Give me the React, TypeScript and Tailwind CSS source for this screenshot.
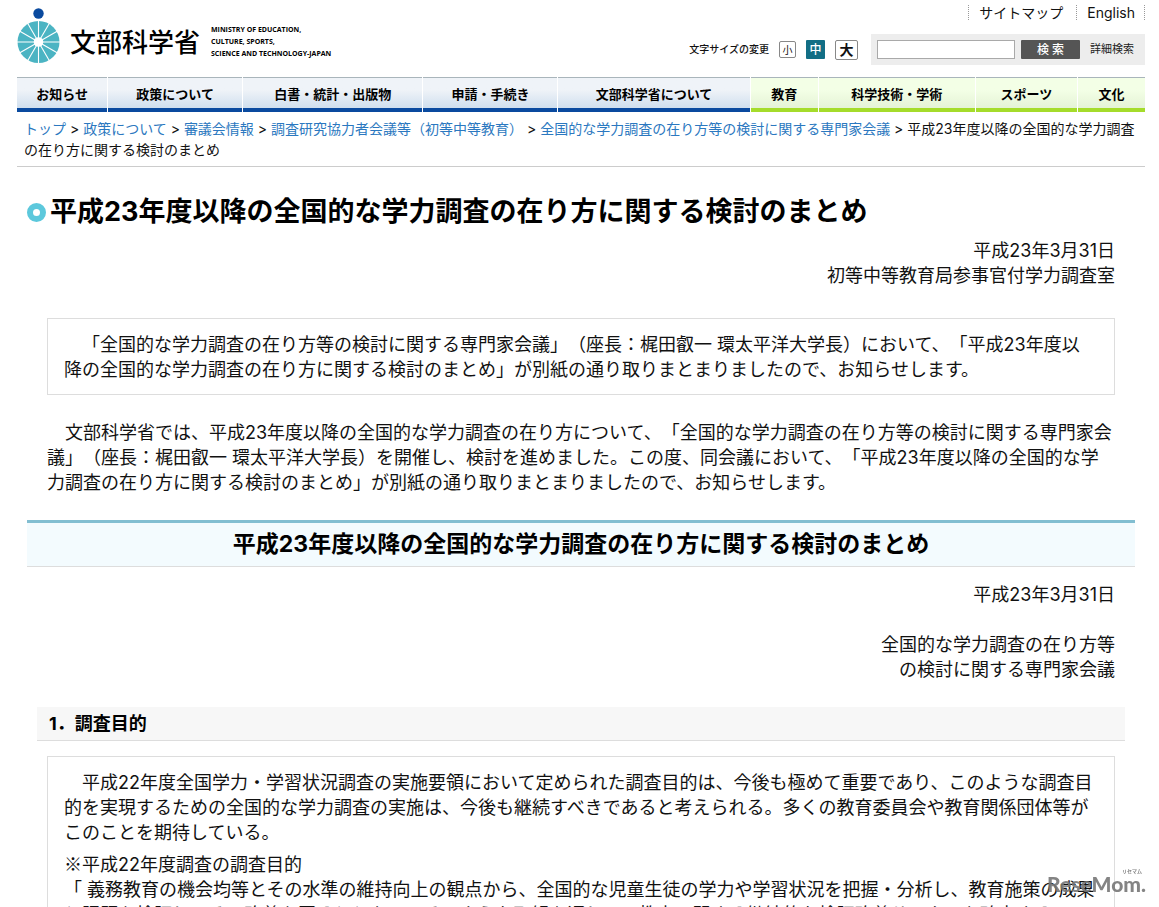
const navItems = [
  { label: "お知らせ", kind: "blue" },
  { label: "政策について", kind: "blue" },
  { label: "白書・統計・出版物", kind: "blue" },
  { label: "申請・手続き", kind: "blue" },
  { label: "文部科学省について", kind: "blue" },
  { label: "教育", kind: "green" },
  { label: "科学技術・学術", kind: "green" },
  { label: "スポーツ", kind: "green" },
  { label: "文化", kind: "green" },
];

const crumbs = [
  "トップ",
  "政策について",
  "審議会情報",
  "調査研究協力者会議等（初等中等教育）",
  "全国的な学力調査の在り方等の検討に関する専門家会議",
];

const title = "平成23年度以降の全国的な学力調査の在り方に関する検討のまとめ";

const Emblem = () => (
  <svg width="44" height="56" viewBox="0 0 44 56" aria-hidden="true">
    <circle cx="21.5" cy="5.5" r="5.2" fill="#0a4a9f" />
    <circle cx="21.5" cy="34" r="21" fill="#4bb4c3" />
    {[0, 30, 60, 90, 120, 150].map((angle) => (
      <line
        key={angle}
        x1="21.5"
        y1="12"
        x2="21.5"
        y2="56"
        stroke="#fff"
        strokeWidth="1.1"
        transform={`rotate(${angle} 21.5 34)`}
      />
    ))}
    <circle cx="21.5" cy="34" r="4.8" fill="#fff" />
  </svg>
);

const Header = () => {
  return (
    <header className="flex justify-between h-[77px]">
      <a href="#" className="flex items-start pt-2 text-black">
        <Emblem />
        <span className="ml-[9px] mt-4 text-[26px] leading-[38px] font-medium whitespace-nowrap">
          文部科学省
        </span>
        <span className="ml-[11px] mt-4 font-['Open_Sans','Noto_Sans',sans-serif] text-[7px] leading-[12px] font-bold whitespace-nowrap">
          MINISTRY OF EDUCATION,
          <br />
          CULTURE, SPORTS,
          <br />
          SCIENCE AND TECHNOLOGY-JAPAN
        </span>
      </a>

      <div className="flex flex-col items-end">
        <ul className="flex mt-[5px] mb-[14px] text-[14px] leading-[15px] border-r border-dotted border-[#999]">
          <li className="border-l border-dotted border-[#999] pl-[10px] pr-[13px]">
            <a href="#">サイトマップ</a>
          </li>
          <li className="border-l border-dotted border-[#999] pl-[10px] pr-[9px]">
            <a href="#">English</a>
          </li>
        </ul>

        <div className="flex items-center">
          <span className="text-[10px] mr-[10px] font-medium whitespace-nowrap">
            文字サイズの変更
          </span>
          <div className="flex items-center gap-[10px] mr-[13px]">
            <button className="grid place-items-center size-[17px] border border-[#888] rounded-[2px] bg-white text-[10px] leading-none">
              小
            </button>
            <button className="grid place-items-center size-[19px] bg-[#126e85] rounded-[1px] text-white text-[12px] leading-none font-medium">
              中
            </button>
            <button className="grid place-items-center w-[23px] h-5 border border-[#888] rounded-[2px] bg-white text-[14px] leading-none font-bold">
              大
            </button>
          </div>
          <form
            className="flex items-center h-[31px] pl-[6px] pr-[11px] bg-[#ededed]"
            onSubmit={(e) => e.preventDefault()}
          >
            <input
              type="text"
              aria-label="サイト内検索"
              className="w-[138px] h-[19px] px-1 bg-white border border-[#a9a9a9] text-[12px]"
            />
            <button
              type="submit"
              className="ml-[6px] w-[59px] h-[19px] rounded-[1px] bg-[#555] text-white text-[12px] leading-none font-medium"
            >
              検 索
            </button>
            <a href="#" className="ml-[10px] text-[11px] text-[#222] whitespace-nowrap">
              詳細検索
            </a>
          </form>
        </div>
      </div>
    </header>
  );
};

const GlobalNav = () => {
  return (
    <nav>
      <ul className="grid grid-cols-[90fr_134fr_179fr_134fr_191fr_67fr_156fr_101fr_67fr] gap-px text-[13px] font-bold text-black text-center">
        {navItems.map((item) => (
          <li key={item.label}>
            <a
              href="#"
              className={
                item.kind === "blue"
                  ? "block h-[35px] leading-[32px] whitespace-nowrap border-t border-t-[#a9b5bb] border-b-4 border-b-[#0a4a9f] bg-linear-to-b from-[#eff3f8] from-40% to-[#d0dfee]"
                  : "block h-[35px] leading-[32px] whitespace-nowrap border-t border-t-[#a9b5bb] border-b-4 border-b-[#a5dc2b] bg-linear-to-b from-[#f3ffe6] from-40% to-[#e5f3d6]"
              }
            >
              {item.label}
            </a>
          </li>
        ))}
      </ul>
    </nav>
  );
};

const Breadcrumbs = () => {
  return (
    <div className="py-[6px] px-[7px] border-b border-[#ccc] text-[14px] leading-[21px]">
      {crumbs.map((crumb) => (
        <span key={crumb}>
          <a href="#" className="text-[#2b78c0]">
            {crumb}
          </a>
          {" > "}
        </span>
      ))}
      {title}
    </div>
  );
};

const Watermark = () => (
  <div className="fixed right-[13px] bottom-[10px] text-[#777] opacity-90 pointer-events-none">
    <span className="absolute right-1 -top-[3px] text-[5px] leading-[6px] font-bold">
      リセマム
    </span>
    <span className="block font-['Lato',sans-serif] text-[21px] leading-[26px] font-black">
      ReseMom.
    </span>
  </div>
);

export default function App() {
  return (
    <div
      lang="ja"
      className="bg-white text-[#111] pl-[17px] pr-[14px] font-['Inter','Noto_Sans_CJK_JP',sans-serif] [text-spacing-trim:space-all]"
    >
      <Header />
      <GlobalNav />
      <Breadcrumbs />

      <main className="mx-[10px] text-[18px] leading-[25px]">
        <h1 className="flex items-center gap-1 mt-7 mb-[9px] text-[27px] leading-[34px] font-bold text-black">
          <svg width="19" height="19" viewBox="0 0 19 19" className="shrink-0" aria-hidden="true">
            <circle cx="9.5" cy="9.5" r="6.5" fill="none" stroke="#5cc8dc" strokeWidth="6" />
          </svg>
          {title}
        </h1>

        <div className="mx-5">
          <p className="text-right">
            平成23年3月31日
            <br />
            初等中等教育局参事官付学力調査室
          </p>

          <div className="mt-[30px] border border-[#ddd] pl-4 pr-5 pt-[13px] pb-3">
            <p className="indent-[18px]">
              「全国的な学力調査の在り方等の検討に関する専門家会議」（座長：梶田叡一
              環太平洋大学長）において、「平成23年度以降の全国的な学力調査の在り方に関する検討のまとめ」が別紙の通り取りまとまりましたので、お知らせします。
            </p>
          </div>

          <p className="mt-[25px] indent-[18px]">
            文部科学省では、平成23年度以降の全国的な学力調査の在り方について、「全国的な学力調査の在り方等の検討に関する専門家会議」（座長：梶田叡一
            環太平洋大学長）を開催し、検討を進めました。この度、同会議において、「平成23年度以降の全国的な学力調査の在り方に関する検討のまとめ」が別紙の通り取りまとまりましたので、お知らせします。
          </p>
        </div>

        <h2 className="mt-[25px] border-t-3 border-t-[#82bed1] border-b border-b-[#ddd] bg-[#f3fbfe] py-[5px] text-center text-[23px] leading-[33px] font-bold text-black">
          {title}
        </h2>

        <div className="mx-5 mt-[15px] text-right">
          <p>平成23年3月31日</p>
          <p className="mt-[25px]">
            全国的な学力調査の在り方等
            <br />
            の検討に関する専門家会議
          </p>
        </div>

        <h3 className="mx-[10px] mt-[25px] px-3 py-1 border-b border-[#ddd] bg-[#f7f7f7] font-bold text-black">
          1．調査目的
        </h3>

        <div className="mx-5 mt-[15px] border border-[#ddd] px-4 py-[13px]">
          <p className="indent-[18px]">
            平成22年度全国学力・学習状況調査の実施要領において定められた調査目的は、今後も極めて重要であり、このような調査目的を実現するための全国的な学力調査の実施は、今後も継続すべきであると考えられる。多くの教育委員会や教育関係団体等がこのことを期待している。
          </p>
          <p className="mt-[7px]">
            <span className="font-['Noto_Sans_CJK_JP',sans-serif] leading-none">※</span>
            平成22年度調査の調査目的
            <br />
            「 義務教育の機会均等とその水準の維持向上の観点から、全国的な児童生徒の学力や学習状況を把握・分析し、教育施策の成果と課題を検証し、その改善を図るとともに、そのような取組を通じて、教育に関する継続的な検証改善サイクルを確立する。」
          </p>
        </div>
      </main>

      <Watermark />
    </div>
  );
}
